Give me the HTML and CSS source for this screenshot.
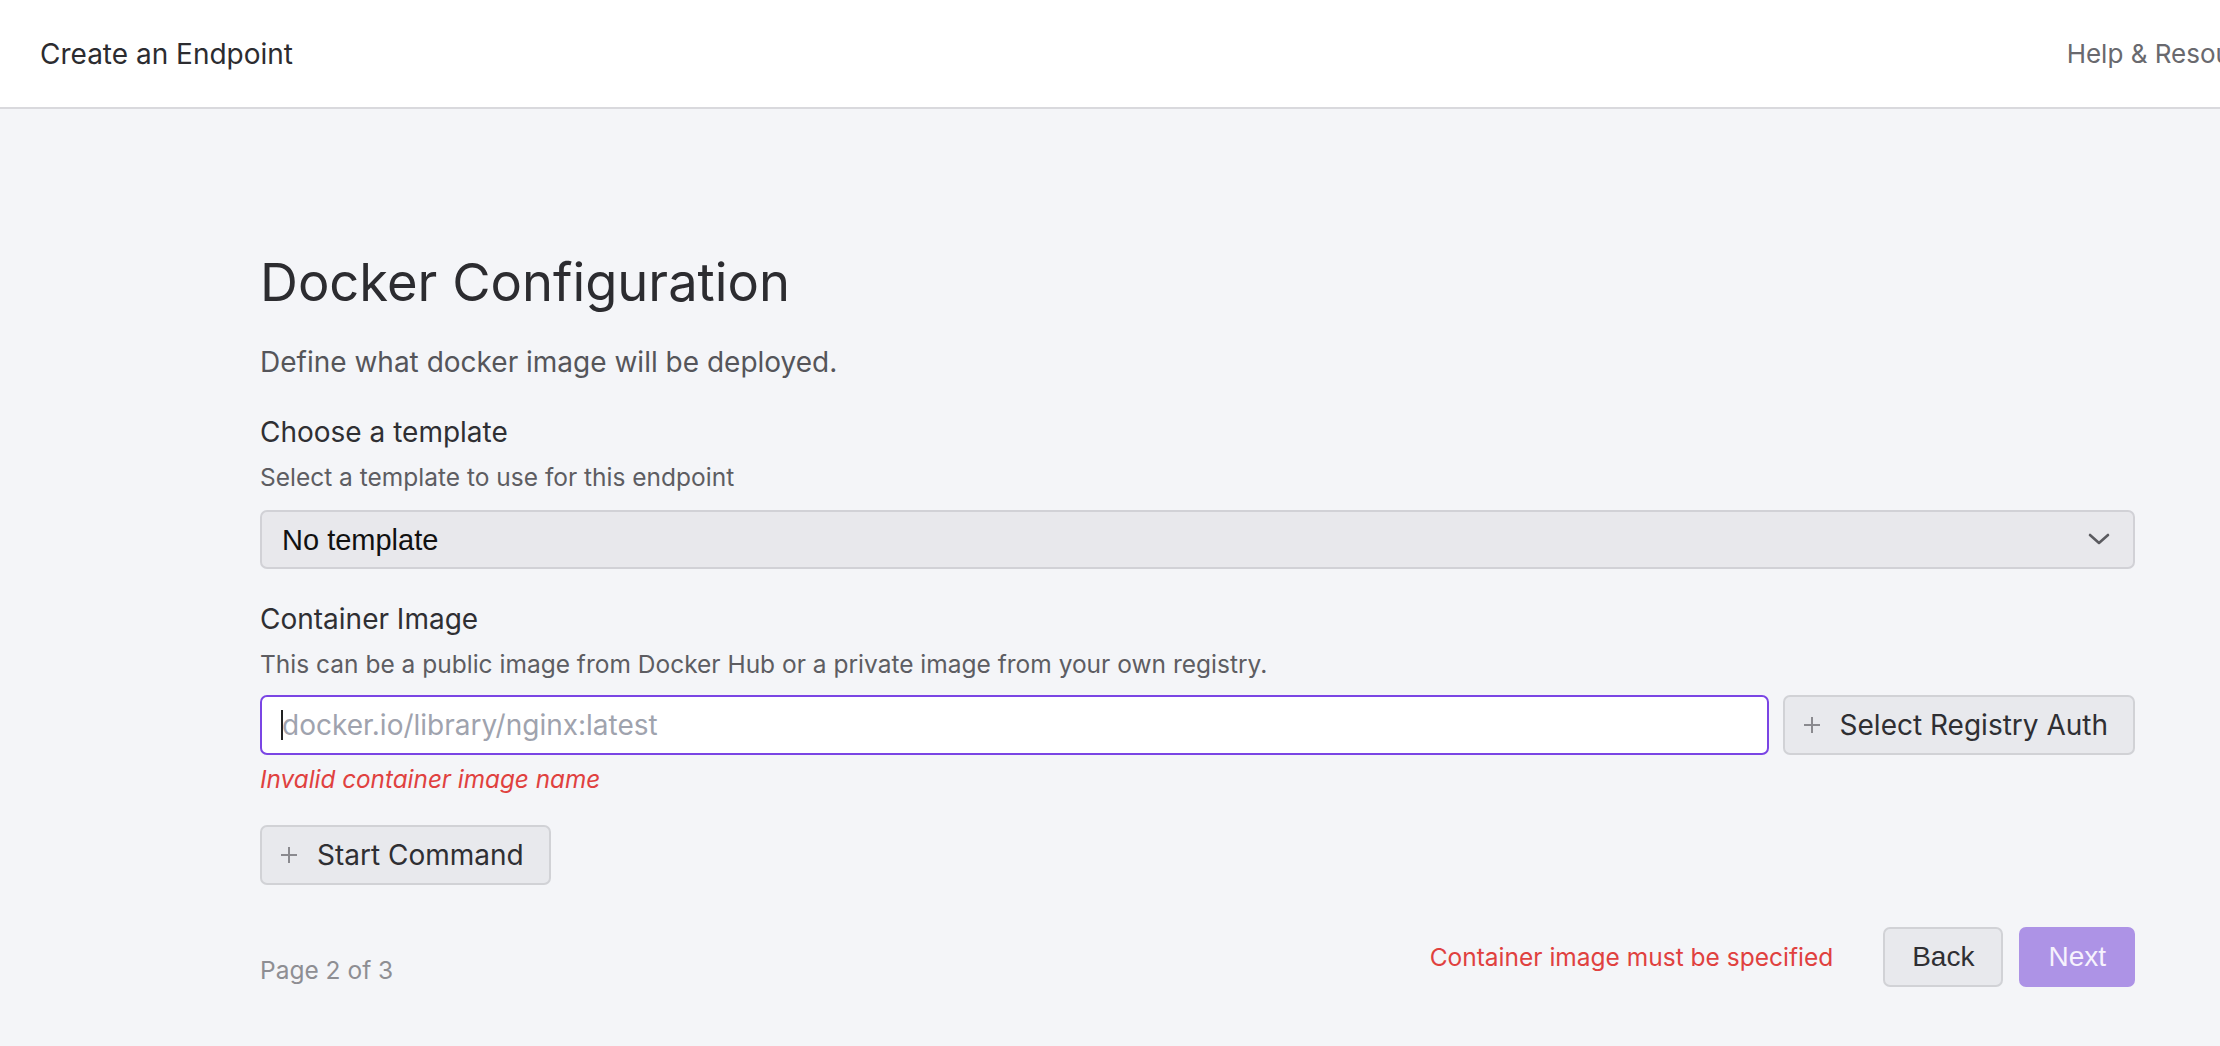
FILE: index.html
```html
<!DOCTYPE html>
<html lang="en">
<head>
    <meta charset="UTF-8">
    <meta name="viewport" content="width=device-width, initial-scale=1.0">
    <title>Create an Endpoint</title>
    <link rel="stylesheet" href="styles.css">
</head>
<body>
    <header class="topbar">
        <div class="topbar-inner">
            <span class="topbar-title">Create an Endpoint</span>
            <a class="topbar-help" href="#">Help &amp; Resources</a>
        </div>
    </header>

    <main class="content">
        <h1 class="page-title">Docker Configuration</h1>
        <p class="page-desc">Define what docker image will be deployed.</p>

        <div class="field">
            <label class="field-label" for="template">Choose a template</label>
            <p class="field-hint">Select a template to use for this endpoint</p>
            <div class="select-wrap">
                <select id="template" class="select">
                    <option>No template</option>
                </select>
                <svg class="select-chevron" width="22" height="12" viewBox="0 0 22 12">
                    <path d="M2 2 L11 10 L20 2" fill="none" stroke="#5b5b60" stroke-width="2.6" stroke-linecap="round" stroke-linejoin="round"/>
                </svg>
            </div>
        </div>

        <div class="field">
            <label class="field-label" for="image">Container Image</label>
            <p class="field-hint">This can be a public image from Docker Hub or a private image from your own registry.</p>
            <div class="image-row">
                <div class="input-wrap">
                    <input id="image" class="input" type="text" placeholder="docker.io/library/nginx:latest">
                    <span class="caret"></span>
                </div>
                <button class="btn btn-plus">
                    <svg class="plus" width="18" height="18" viewBox="0 0 18 18"><path d="M9 1 V17 M1 9 H17" stroke="#8a8a8f" stroke-width="2"/></svg>
                    Select Registry Auth
                </button>
            </div>
            <p class="field-error">Invalid container image name</p>
        </div>

        <button class="btn btn-plus btn-start">
            <svg class="plus" width="18" height="18" viewBox="0 0 18 18"><path d="M9 1 V17 M1 9 H17" stroke="#8a8a8f" stroke-width="2"/></svg>
            Start Command
        </button>

        <div class="wizard-footer">
            <span class="page-count">Page 2 of 3</span>
            <div class="wizard-actions">
                <span class="wizard-error">Container image must be specified</span>
                <button class="nav-btn nav-back">Back</button>
                <button class="nav-btn nav-next" disabled>Next</button>
            </div>
        </div>
    </main>
</body>
</html>
```

FILE: styles.css
```css
body {
    font-family: Inter, "Noto Sans", sans-serif;
    margin: 0;
    padding: 0;
    background-color: #f4f5f8;
    color: #2f2f33;
    overflow: hidden;
}

.topbar {
    background-color: #fff;
    border-bottom: 2px solid #d9d9dd;
    height: 107px;
    overflow: hidden;
}

/* the real bar is wider than the window, the help link runs off the edge */
.topbar-inner {
    width: calc(100% + 104px);
    height: 100%;
    display: flex;
    align-items: center;
    justify-content: space-between;
    padding: 0 40px;
    box-sizing: border-box;
}

.topbar-title {
    font-size: 28px;
    color: #2c2c30;
}

.topbar-help {
    font-size: 26px;
    color: #69696e;
    text-decoration: none;
    white-space: nowrap;
}

.content {
    width: 1875px;
    margin-left: 260px;
    padding-top: 141px;
}

.page-title {
    font-size: 52.5px;
    font-weight: 400;
    line-height: 64px;
    margin: 0;
    color: #2c2c30;
}

.page-desc {
    font-size: 28px;
    line-height: 40px;
    margin: 28px 0 0;
    color: #55555a;
}

.field {
    margin-top: 32px;
}

.field-label {
    display: block;
    font-size: 28px;
    line-height: 36px;
    color: #2f2f33;
}

.field-hint {
    font-size: 24.5px;
    line-height: 34px;
    margin: 10px 0 0;
    color: #5d5d62;
}

.select-wrap {
    position: relative;
    margin-top: 16px;
}

.select {
    width: 100%;
    height: 59px;
    appearance: none;
    background-color: #e8e8ec;
    border: 2px solid #d1d1d6;
    border-radius: 7px;
    padding: 0 20px;
    font-family: "Liberation Sans", Arial, sans-serif;
    font-size: 29px;
    color: #111;
}

.select-chevron {
    position: absolute;
    right: 25px;
    top: 23px;
}

.image-row {
    display: flex;
    gap: 14px;
    margin-top: 14px;
}

.input-wrap {
    position: relative;
    flex: 1;
}

.input {
    width: 100%;
    height: 60px;
    box-sizing: border-box;
    background-color: #fff;
    border: 2px solid #7a45e4;
    border-radius: 7px;
    padding: 0 20px;
    font-family: Inter, sans-serif;
    font-size: 28px;
    outline: none;
}

.input::placeholder {
    color: #9fa3ae;
}

.caret {
    position: absolute;
    left: 21px;
    top: 15px;
    width: 2px;
    height: 30px;
    background-color: #222;
}

.btn {
    display: flex;
    align-items: center;
    height: 60px;
    box-sizing: border-box;
    background-color: #e8e9ed;
    border: 2px solid #d1d2d6;
    border-radius: 7px;
    font-family: Inter, sans-serif;
    font-size: 28px;
    color: #2f2f33;
    cursor: pointer;
}

.btn-plus {
    padding: 0 25px 0 18px;
    gap: 19px;
    white-space: nowrap;
}

.field-error {
    font-size: 24.3px;
    line-height: 34px;
    font-style: italic;
    color: #e0413f;
    margin: 7px 0 0;
}

.btn-start {
    margin-top: 29px;
}

.wizard-footer {
    display: flex;
    justify-content: space-between;
    align-items: flex-end;
    margin-top: 42px;
}

.page-count {
    font-size: 24.5px;
    line-height: 34px;
    color: #8e8e93;
}

.wizard-actions {
    display: flex;
    align-items: center;
}

.wizard-error {
    font-size: 24.5px;
    color: #e0413f;
    margin-right: 50px;
}

.nav-btn {
    height: 60px;
    padding: 0 27px;
    border-radius: 7px;
    font-family: "Liberation Sans", Arial, sans-serif;
    font-size: 28px;
    cursor: pointer;
}

.nav-back {
    background-color: #e8e9ed;
    border: 2px solid #d1d2d6;
    color: #2f2f33;
    margin-right: 16px;
}

.nav-next {
    background-color: #ad93e6;
    border: 2px solid #ad93e6;
    color: #f6f2fd;
}
```
